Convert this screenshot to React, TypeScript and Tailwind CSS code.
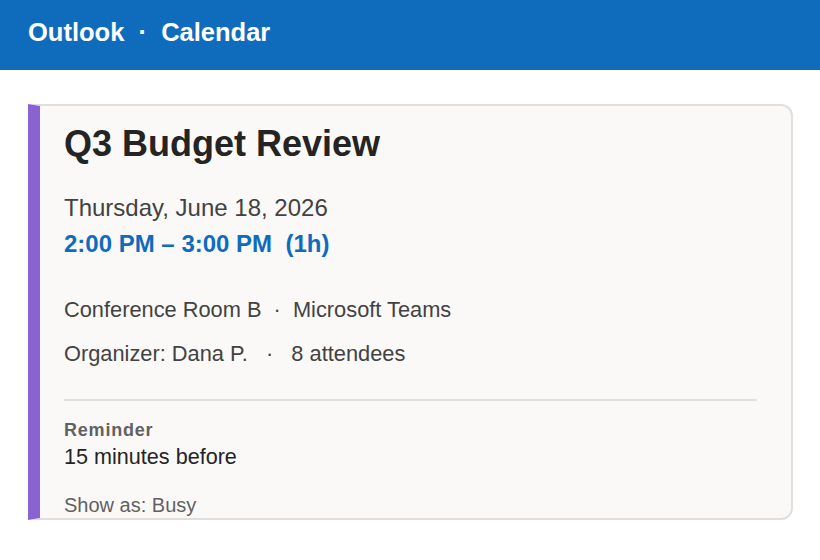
import React from 'react';

const FONT = "font-['Liberation_Sans',Arial,sans-serif]";

function Header() {
  return (
    <div className="h-[70px] bg-[#0f6cbd] px-[28px] pt-[17px]">
      <h1 className="text-[25.5px] leading-[30px] font-bold text-white whitespace-pre">
        {'Outlook  ·  Calendar'}
      </h1>
    </div>
  );
}

function EventCard() {
  return (
    <div className="mx-[28px] mr-[27px] mt-[34px] h-[416px] overflow-hidden rounded-r-[12px] border-2 border-l-[12px] border-[#e1dfdd] border-l-[#8a63d2] bg-[#faf9f8] pl-6 pr-[34px] pt-[18px]">
      <h2 className="text-[36px] leading-[40px] font-bold text-[#242424]">Q3 Budget Review</h2>

      <div className="mt-[28px] text-[24px] leading-[32px] text-[#424242]">Thursday, June 18, 2026</div>
      <div className="mt-[4px] text-[24px] leading-[32px] font-bold text-[#0f6cbd] whitespace-pre">
        {'2:00 PM – 3:00 PM  (1h)'}
      </div>

      <div className="mt-[35px] text-[21.8px] leading-[30px] text-[#424242] whitespace-pre">
        {'Conference Room B  ·  Microsoft Teams'}
      </div>
      <div className="mt-[14px] text-[21.8px] leading-[30px] text-[#424242] whitespace-pre">
        {'Organizer: Dana P.   ·   8 attendees'}
      </div>

      <div className="mt-[30px] h-[2px] bg-[#e1dfdd]" />

      {/* Reminder */}
      <div className="mt-[17px] text-[18px] leading-[24px] font-bold tracking-[0.8px] text-[#616161]">Reminder</div>
      <div className="mt-[0px] text-[21.6px] leading-[30px] text-[#242424]">15 minutes before</div>

      <div className="mt-[19px] text-[20px] leading-[28px] text-[#616161]">Show as: Busy</div>
    </div>
  );
}

export default function App() {
  return (
    <div className={`${FONT} min-h-[560px] w-[820px] bg-white`}>
      <Header />
      <EventCard />
    </div>
  );
}
